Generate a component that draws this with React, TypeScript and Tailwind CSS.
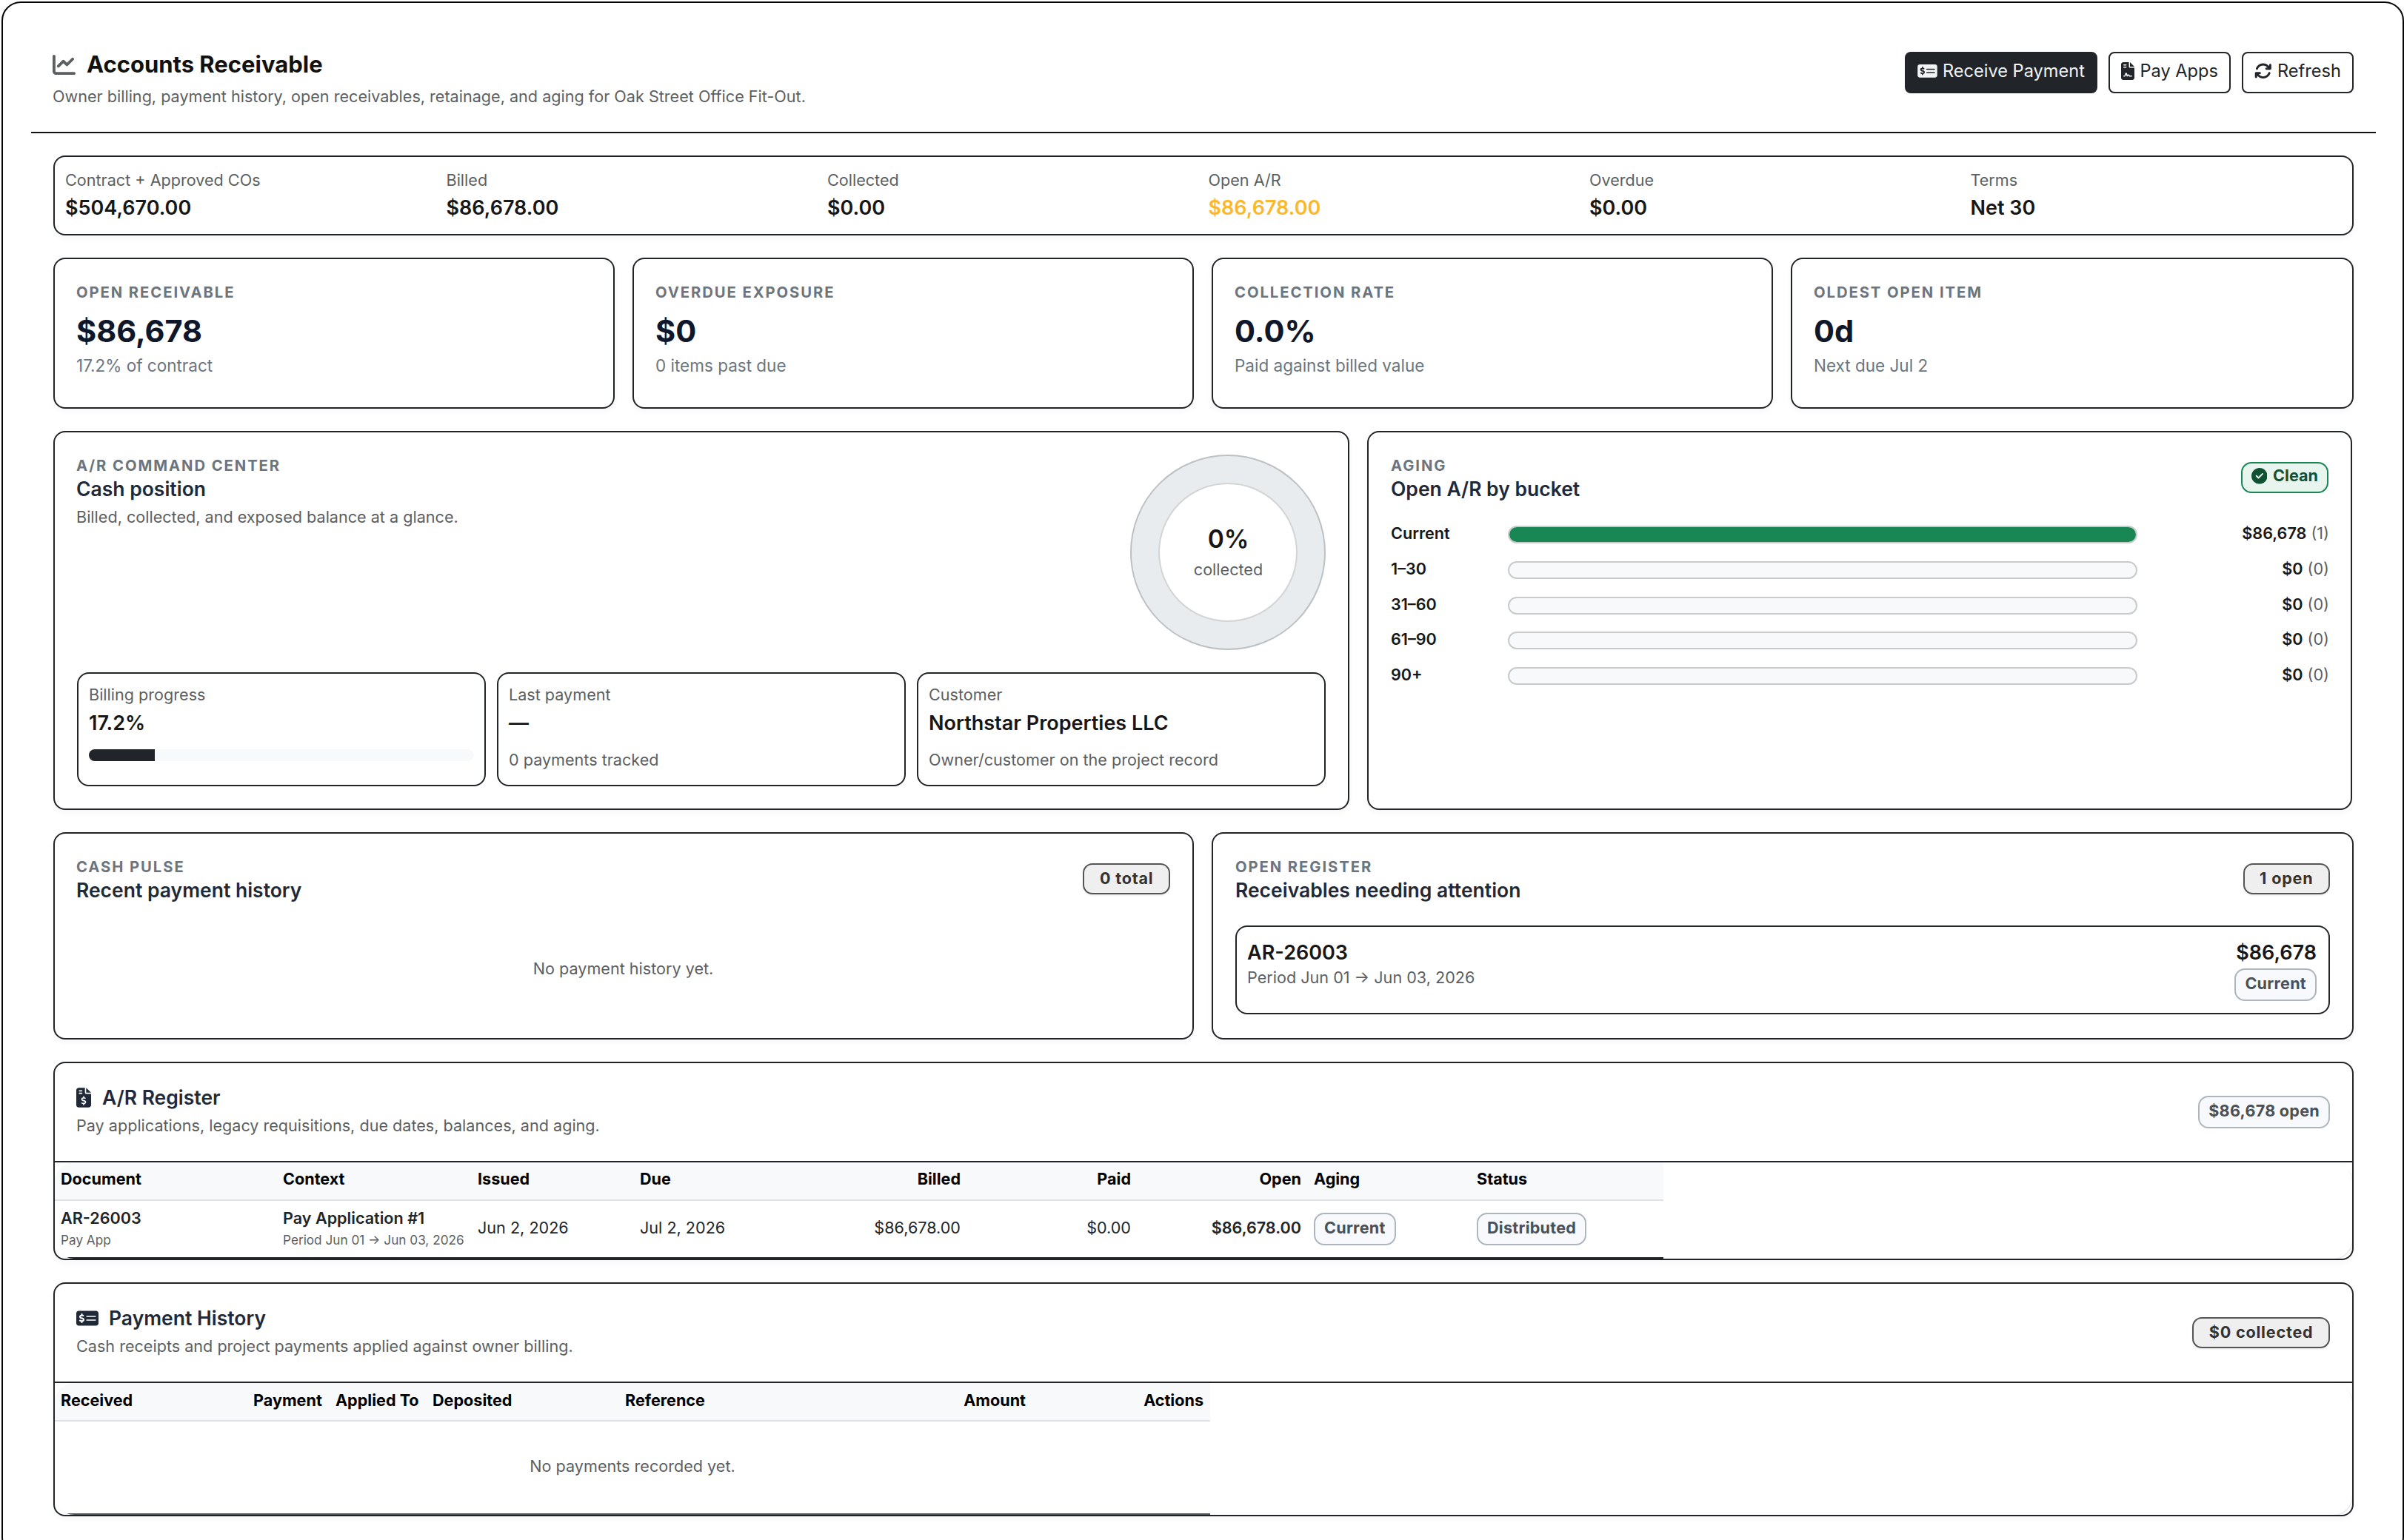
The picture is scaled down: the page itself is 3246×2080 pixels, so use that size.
import type { ReactNode } from "react";
import { clsx } from "clsx";
import {
  FaArrowsRotate,
  FaChartLine,
  FaCircleCheck,
  FaFileContract,
  FaFileInvoiceDollar,
  FaMoneyCheckDollar,
} from "react-icons/fa6";

const CARD = "rounded-[16px] border-2 border-[#212529] bg-white shadow-[0_4px_8px_rgba(0,0,0,0.035)]";
const MUTED = "text-[21.6px] leading-[30px] text-[#5c5f62]";

const summary = [
  { label: "Contract + Approved COs", value: "$504,670.00" },
  { label: "Billed", value: "$86,678.00" },
  { label: "Collected", value: "$0.00" },
  { label: "Open A/R", value: "$86,678.00", warn: true },
  { label: "Overdue", value: "$0.00" },
  { label: "Terms", value: "Net 30" },
];

const kpis = [
  { label: "Open receivable", value: "$86,678", note: "17.2% of contract" },
  { label: "Overdue exposure", value: "$0", note: "0 items past due" },
  { label: "Collection rate", value: "0.0%", note: "Paid against billed value" },
  { label: "Oldest open item", value: "0d", note: "Next due Jul 2" },
];

const buckets = [
  { label: "Current", amount: "$86,678", count: 1, share: 100 },
  { label: "1–30", amount: "$0", count: 0, share: 0 },
  { label: "31–60", amount: "$0", count: 0, share: 0 },
  { label: "61–90", amount: "$0", count: 0, share: 0 },
  { label: "90+", amount: "$0", count: 0, share: 0 },
];

function Eyebrow({ children }: { children: ReactNode }) {
  return (
    <div className="text-[20.25px] leading-[30px] font-bold tracking-[0.095em] text-[#6c757d] uppercase">
      {children}
    </div>
  );
}

function PanelTitle({ eyebrow, title }: { eyebrow: string; title: string }) {
  return (
    <div>
      <Eyebrow>{eyebrow}</Eyebrow>
      <h2 className="text-[26.5px] leading-[32px] font-semibold text-[#1f2937]">{title}</h2>
    </div>
  );
}

function StatusBadge({ children }: { children: ReactNode }) {
  return (
    <span className="inline-flex h-[44px] items-center rounded-[14px] border-2 border-[#adb5bd] bg-[#f8f9fc] px-[12px] pb-[3px] text-[21.6px] leading-none font-bold tracking-[0.25px] text-[#495057]">
      {children}
    </span>
  );
}

function CountBadge({ children }: { children: ReactNode }) {
  return (
    <span className="inline-flex h-[42px] items-center rounded-[13px] border-2 border-[#555] bg-[#efefef] px-[20.5px] pb-px text-[21.6px] leading-none font-bold tracking-[0.8px] text-[#333] shadow-[0_2px_2px_rgba(0,0,0,0.06)]">
      {children}
    </span>
  );
}

function ActionButton({ icon, label, primary }: { icon: ReactNode; label: string; primary?: boolean }) {
  return (
    <button
      className={clsx(
        "flex h-[56px] items-center rounded-[8px] border-2 border-[#212529] px-[15px] pb-[5px] text-[23.6px]",
        primary ? "bg-[#212529] text-[#f1f3f5]" : "bg-white text-[#212529]",
      )}
    >
      {icon}
      <span className="ml-[7px]">{label}</span>
    </button>
  );
}

function Fact({ label, value, children }: { label: string; value: string; children: ReactNode }) {
  return (
    <div className="h-[154px] rounded-[16px] border-2 border-[#212529] px-[14px] pt-[13px]">
      <div className={MUTED}>{label}</div>
      <div className="mt-[6px] text-[27px] leading-[36px] font-semibold text-[#171717]">{value}</div>
      {children}
    </div>
  );
}

function LedgerCard({
  icon,
  title,
  subtitle,
  badge,
  children,
}: {
  icon: ReactNode;
  title: string;
  subtitle: string;
  badge: ReactNode;
  children: ReactNode;
}) {
  return (
    <section className={CARD}>
      <div className="flex h-[134px] items-center justify-between border-b-2 border-[#212529] pr-[30px] pl-[29px]">
        <div className="self-start pt-[28px]">
          <h2 className="flex items-center text-[26.5px] leading-[36px] font-semibold text-[#1f2937]">
            {icon}
            {title}
          </h2>
          <p className={clsx(MUTED, "mt-[5px]")}>{subtitle}</p>
        </div>
        {badge}
      </div>
      <div className="overflow-hidden rounded-[26px] shadow-[1px_1px_1px_rgba(0,0,0,0.1)]">{children}</div>
    </section>
  );
}

const TH = "h-[52px] border-b-2 border-[#dee2e6] bg-[#f8f9fb] align-middle text-[21.6px] font-bold text-black";
const TD = "h-[78px] border-b-2 border-[#212529] pb-[3px] align-middle text-[21.6px] text-[#212529]";

export default function App() {
  return (
    <div className="h-[2080px] overflow-hidden bg-white pt-[2px] pl-[2px] font-['Inter',sans-serif]">
      <div className="h-[2100px] rounded-[26px] border-2 border-[#050507] pr-[36px] pl-[38px]">
        <header className="flex h-[176px] items-start justify-between border-b-2 border-[#111] pr-[30px] pl-[29px]">
          <div className="pt-[63px]">
            <h1 className="flex items-center text-[31px] leading-[40px] font-bold text-[#111]">
              <FaChartLine className="mr-[15px] size-[31px] text-[#5c5f62]" />
              Accounts Receivable
            </h1>
            <p className={clsx(MUTED, "mt-[8px]")}>
              Owner billing, payment history, open receivables, retainage, and aging for Oak Street Office Fit-Out.
            </p>
          </div>
          <div className="flex gap-[15.5px] pt-[66px]">
            <ActionButton primary icon={<FaMoneyCheckDollar className="h-[23.6px] w-[27px]" />} label="Receive Payment" />
            <ActionButton icon={<FaFileContract className="h-[24px] w-[18px]" />} label="Pay Apps" />
            <ActionButton icon={<FaArrowsRotate className="size-[23.6px]" />} label="Refresh" />
          </div>
        </header>

        <main className="flex flex-col gap-[30px] px-[30px] pt-[30px]">
          <section className={clsx(CARD, "grid h-[108px] grid-cols-6 gap-x-[13px] px-[14px] pt-[16px]")}>
            {summary.map((item) => (
              <div key={item.label}>
                <div className={MUTED}>{item.label}</div>
                <div
                  className={clsx(
                    "mt-[5px] text-[27px] leading-[36px] font-semibold",
                    item.warn ? "text-[#fdb72c]" : "text-[#171717]",
                  )}
                >
                  {item.value}
                </div>
              </div>
            ))}
          </section>

          <section className="grid grid-cols-[757.5px_757.5px_757.5px_1fr] gap-[24.5px]">
            {kpis.map((kpi) => (
              <div key={kpi.label} className={clsx(CARD, "h-[204px] px-[29px] pt-[30px]")}>
                <Eyebrow>{kpi.label}</Eyebrow>
                <div className="mt-[12px] text-[41.5px] leading-[50px] font-bold text-[#0f172a]">{kpi.value}</div>
                <div className="mt-[7px] text-[22.5px] leading-[30px] text-[#6c757d]">{kpi.note}</div>
              </div>
            ))}
          </section>

          <section className="grid h-[512px] grid-cols-[1750px_1330px] gap-[24px]">
            <div className={clsx(CARD, "p-[30px]")}>
              <div className="-ml-px flex justify-between">
                <div>
                  <PanelTitle eyebrow="A/R Command Center" title="Cash position" />
                  <p className={clsx(MUTED, "mt-[7px]")}>Billed, collected, and exposed balance at a glance.</p>
                </div>
                <div className="flex size-[264px] items-center justify-center rounded-full border-2 border-[#bec1c4] bg-[#e9ecef]">
                  <div className="flex size-[188px] flex-col items-center justify-center rounded-full border-2 border-[#d3d4d5] bg-white pl-px">
                    <div className="text-[33.5px] leading-[42px] font-semibold text-[#171717]">0%</div>
                    <div className="mt-[4px] text-[21.6px] leading-[32px] text-[#5c5f62]">collected</div>
                  </div>
                </div>
              </div>
              <div className="mt-[30px] grid grid-cols-3 gap-[15px]">
                <Fact label="Billing progress" value="17.2%">
                  <div className="mt-[17px] h-[16px] overflow-hidden rounded-[8px] bg-[#f8f9fb]">
                    <div className="h-full bg-[#212529]" style={{ width: "17.2%" }} />
                  </div>
                </Fact>
                <Fact label="Last payment" value="—">
                  <div className={clsx(MUTED, "mt-[16px]")}>0 payments tracked</div>
                </Fact>
                <Fact label="Customer" value="Northstar Properties LLC">
                  <div className={clsx(MUTED, "mt-[16px]")}>Owner/customer on the project record</div>
                </Fact>
              </div>
            </div>

            <div className={clsx(CARD, "py-[30px] pr-[29px] pl-[30px]")}>
              <div className="flex items-center justify-between">
                <PanelTitle eyebrow="Aging" title="Open A/R by bucket" />
                <span className="mr-px flex h-[42px] items-center rounded-[14px] border-2 border-[#198754] bg-[#e8f5ee] px-[12px] pb-[4px] text-[21.6px] leading-none font-bold text-[#0f5132]">
                  <FaCircleCheck className="mr-[8px] size-[21.6px]" />
                  Clean
                </span>
              </div>
              <div className="mt-[34px] flex flex-col gap-[23.75px]">
                {buckets.map((b) => (
                  <div
                    key={b.label}
                    className="grid h-[24px] grid-cols-[158px_850px_1fr] text-[21.6px] leading-[21px] text-[#171717]"
                  >
                    <span className="font-semibold">{b.label}</span>
                    <span className="overflow-hidden rounded-[12px] border-2 border-[#c8cacc] bg-[#f8f9fb]">
                      <span className="block h-full bg-[#198754]" style={{ width: `${b.share}%` }} />
                    </span>
                    <span className="text-right">
                      <b className="font-semibold">{b.amount}</b> <span className="text-[#5c5f62]">({b.count})</span>
                    </span>
                  </div>
                ))}
              </div>
            </div>
          </section>

          <section className="grid h-[280px] grid-cols-[1540px_1fr] gap-[24px]">
            <div className={clsx(CARD, "py-[30px] pr-[30px] pl-[29px]")}>
              <div className="flex items-center justify-between">
                <PanelTitle eyebrow="Cash Pulse" title="Recent payment history" />
                <CountBadge>0 total</CountBadge>
              </div>
              <p className={clsx(MUTED, "mt-[75px] text-center")}>No payment history yet.</p>
            </div>

            <div className={clsx(CARD, "p-[30px]")}>
              <div className="flex items-center justify-between">
                <PanelTitle eyebrow="Open Register" title="Receivables needing attention" />
                <CountBadge>1 open</CountBadge>
              </div>
              <div className="mt-[32px] flex h-[120px] justify-between rounded-[16px] border-2 border-[#212529] pt-[17px] pr-[16px] pl-[14px]">
                <div>
                  <div className="text-[27px] leading-[36px] font-semibold text-[#171717]">AR-26003</div>
                  <div className={MUTED}>Period Jun 01 → Jun 03, 2026</div>
                </div>
                <div className="flex flex-col items-end">
                  <div className="text-[27px] leading-[36px] font-semibold text-[#171717]">$86,678</div>
                  <div className="mt-[3px] flex">
                    <StatusBadge>Current</StatusBadge>
                  </div>
                </div>
              </div>
            </div>
          </section>

          <LedgerCard
            icon={<FaFileInvoiceDollar className="mr-[15px] h-[27px] w-[20px]" />}
            title="A/R Register"
            subtitle="Pay applications, legacy requisitions, due dates, balances, and aging."
            badge={<StatusBadge>$86,678 open</StatusBadge>}
          >
            <table className="w-[2172px] table-fixed border-separate border-spacing-0 text-left">
              <colgroup>
                <col className="w-[299px]" />
                <col className="w-[263px]" />
                <col className="w-[219px]" />
                <col className="w-[221px]" />
                <col className="w-[230px]" />
                <col className="w-[230px]" />
                <col className="w-[230px]" />
                <col className="w-[220px]" />
                <col className="w-[260px]" />
              </colgroup>
              <thead>
                <tr>
                  <th className={clsx(TH, "pb-[5px] pl-[8px]")}>Document</th>
                  <th className={clsx(TH, "pb-[5px] pl-[9px]")}>Context</th>
                  <th className={clsx(TH, "pb-[5px] pl-[9px]")}>Issued</th>
                  <th className={clsx(TH, "pb-[5px] pl-[9px]")}>Due</th>
                  <th className={clsx(TH, "pr-[9px] pb-[5px] text-right")}>Billed</th>
                  <th className={clsx(TH, "pr-[9px] pb-[5px] text-right")}>Paid</th>
                  <th className={clsx(TH, "pr-[9px] pb-[5px] text-right")}>Open</th>
                  <th className={clsx(TH, "pb-[5px] pl-[8px]")}>Aging</th>
                  <th className={clsx(TH, "pb-[5px] pl-[8px]")}>Status</th>
                </tr>
              </thead>
              <tbody>
                <tr>
                  <td className={clsx(TD, "pl-[8px]")}>
                    <div className="leading-[30px] font-semibold">AR-26003</div>
                    <div className="mt-[3px] text-[17.2px] leading-[24px] text-[#5c5f62]">Pay App</div>
                  </td>
                  <td className={clsx(TD, "pl-[9px]")}>
                    <div className="leading-[30px] font-semibold">Pay Application #1</div>
                    <div className="mt-[3px] text-[17.2px] leading-[24px] whitespace-nowrap text-[#5c5f62]">
                      Period Jun 01 → Jun 03, 2026
                    </div>
                  </td>
                  <td className={clsx(TD, "pl-[9px]")}>Jun 2, 2026</td>
                  <td className={clsx(TD, "pl-[9px]")}>Jul 2, 2026</td>
                  <td className={clsx(TD, "pr-[9px] text-right")}>$86,678.00</td>
                  <td className={clsx(TD, "pr-[9px] text-right")}>$0.00</td>
                  <td className={clsx(TD, "pr-[9px] text-right font-semibold")}>$86,678.00</td>
                  <td className={clsx(TD, "pl-[8px]")}>
                    <div className="flex pt-[3px]">
                      <StatusBadge>Current</StatusBadge>
                    </div>
                  </td>
                  <td className={clsx(TD, "pl-[8px]")}>
                    <div className="flex pt-[3px]">
                      <StatusBadge>Distributed</StatusBadge>
                    </div>
                  </td>
                </tr>
              </tbody>
            </table>
          </LedgerCard>

          <LedgerCard
            icon={<FaMoneyCheckDollar className="mr-[14px] h-[27px] w-[30px]" />}
            title="Payment History"
            subtitle="Cash receipts and project payments applied against owner billing."
            badge={<CountBadge>$0 collected</CountBadge>}
          >
            <table className="w-[1560px] table-fixed border-separate border-spacing-0 text-left">
              <colgroup>
                <col className="w-[259px]" />
                <col className="w-[112px]" />
                <col className="w-[130px]" />
                <col className="w-[260px]" />
                <col className="w-[330px]" />
                <col className="w-[229px]" />
                <col className="w-[240px]" />
              </colgroup>
              <thead>
                <tr>
                  <th className={clsx(TH, "pb-[3px] pl-[8px]")}>Received</th>
                  <th className={clsx(TH, "pb-[3px] pl-[9px]")}>Payment</th>
                  <th className={clsx(TH, "pb-[3px] pl-[8px] whitespace-nowrap")}>Applied To</th>
                  <th className={clsx(TH, "pb-[3px] pl-[9px]")}>Deposited</th>
                  <th className={clsx(TH, "pb-[3px] pl-[9px]")}>Reference</th>
                  <th className={clsx(TH, "pr-[9px] pb-[3px] text-right")}>Amount</th>
                  <th className={clsx(TH, "pr-[9px] pb-[3px] text-right")}>Actions</th>
                </tr>
              </thead>
              <tbody>
                <tr>
                  <td
                    colSpan={7}
                    className="h-[126px] border-b-2 border-[#4d5154] pb-[3px] text-center align-middle text-[21.6px] text-[#5c5f62]"
                  >
                    No payments recorded yet.
                  </td>
                </tr>
              </tbody>
            </table>
          </LedgerCard>
        </main>
      </div>
    </div>
  );
}
